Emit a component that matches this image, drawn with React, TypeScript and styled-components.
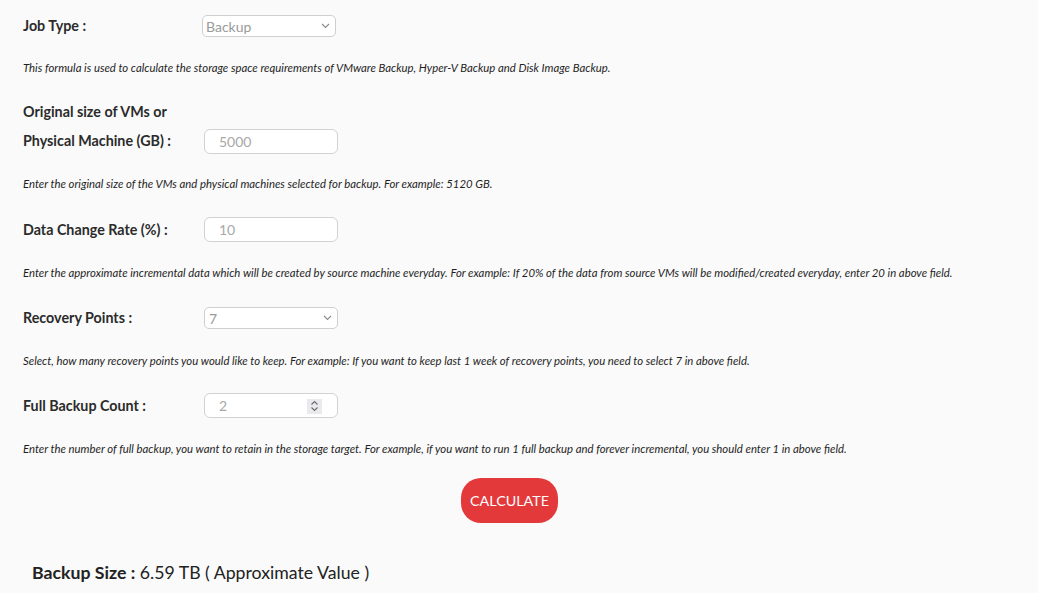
import React from "react";
import styled, { createGlobalStyle } from "styled-components";

const Global = createGlobalStyle`
  html, body { margin: 0; padding: 0; background: #fafafa; }
  body { font-family: Lato, "Open Sans", sans-serif; color: #222; }
`;

const Page = styled.div`
  padding: 11px 42px 0 23px;
  width: 1038px;
  box-sizing: border-box;
`;

const Block = styled.section`
  display: flex;
  flex-direction: column;
`;

const Row = styled.div`
  display: flex;
  align-items: flex-end;
`;

const Label = styled.label`
  width: 160px;
  flex: none;
  font-size: 14.3px;
  font-weight: 700;
  line-height: 29px;
  color: #2b2b2b;
`;

const Control = styled.div<{ $offset: number; $bottom: number }>`
  margin-left: ${(p) => p.$offset}px;
  margin-bottom: ${(p) => p.$bottom}px;
  position: relative;
  display: flex;
`;

const Select = styled.select<{ $pad: number }>`
  width: 134px;
  height: 22px;
  box-sizing: border-box;
  border: 1px solid #cfcfcf;
  border-radius: 5px;
  background: #fff;
  color: #9a9a9a;
  font-family: Lato, sans-serif;
  font-size: 14px;
  padding: 0 0 0 ${(p) => p.$pad}px;
  appearance: none;
  outline: none;
`;

const Chevron = styled.svg`
  position: absolute;
  right: 6px;
  top: 50%;
  margin-top: -3px;
  width: 9px;
  height: 6px;
  pointer-events: none;
`;

const Input = styled.input`
  width: 134px;
  height: 25px;
  box-sizing: border-box;
  border: 1px solid #d2d2d2;
  border-radius: 6px;
  background: #fff;
  font-family: Lato, sans-serif;
  font-size: 14px;
  padding: 0 0 0 14px;
  outline: none;
  &::placeholder { color: #a8a8a8; }
  &::-webkit-inner-spin-button, &::-webkit-outer-spin-button {
    -webkit-appearance: none;
    margin: 0;
  }
  -moz-appearance: textfield;
`;

const Spinner = styled.span`
  position: absolute;
  right: 16px;
  top: 50%;
  margin-top: -7px;
  width: 15px;
  height: 15px;
  background: #e9e9ee;
  display: flex;
  align-items: center;
  justify-content: center;
  pointer-events: none;
`;

const Desc = styled.p<{ $top?: number; $bottom?: number }>`
  margin: ${(p) => p.$top ?? 21}px 0 ${(p) => p.$bottom ?? 22}px;
  font-size: 11.35px;
  font-style: italic;
  line-height: 16px;
  color: #1f1f1f;
`;

const ButtonRow = styled.div`
  display: flex;
  justify-content: center;
`;

const CalcButton = styled.button`
  width: 97px;
  height: 45px;
  border: none;
  border-radius: 20px;
  background: #e3393b;
  color: #fff;
  font-family: Lato, sans-serif;
  font-size: 14.3px;
  cursor: pointer;
`;

const Result = styled.div`
  margin: 38px 0 0 9px;
  font-size: 17.7px;
  line-height: 24px;
  color: #222;
`;

const Strong = styled.strong`
  font-weight: 700;
`;

const SelectChevron = () => (
  <Chevron viewBox="0 0 9 6">
    <path d="M1 1 L4.5 4.5 L8 1" fill="none" stroke="#8a8a8a" strokeWidth="1.1" />
  </Chevron>
);

const SpinIcon = () => (
  <svg width="9" height="12" viewBox="0 0 9 12">
    <path d="M1.5 4.5 L4.5 1.5 L7.5 4.5 M1.5 7.5 L4.5 10.5 L7.5 7.5" fill="none" stroke="#6b6b6b" strokeWidth="1.1" />
  </svg>
);

export default function App() {
  return (
    <>
      <Global />
      <Page>
        <Block>
          <Row>
            <Label>Job Type :</Label>
            <Control $offset={19} $bottom={3}>
              <Select $pad={3} defaultValue="Backup">
                <option>Backup</option>
              </Select>
              <SelectChevron />
            </Control>
          </Row>
          <Desc $top={20} $bottom={21}>
            This formula is used to calculate the storage space requirements of VMware Backup, Hyper-V Backup and Disk Image Backup.
          </Desc>
        </Block>

        <Block>
          <Row>
            <Label>Original size of VMs or Physical Machine (GB) :</Label>
            <Control $offset={21} $bottom={1}>
              <Input type="text" placeholder="5000" />
            </Control>
          </Row>
          <Desc $bottom={23}>Enter the original size of the VMs and physical machines selected for backup. For example: 5120 GB.</Desc>
        </Block>

        <Block>
          <Row>
            <Label>Data Change Rate (%) :</Label>
            <Control $offset={21} $bottom={2}>
              <Input type="text" placeholder="10" />
            </Control>
          </Row>
          <Desc>
            Enter the approximate incremental data which will be created by source machine everyday. For example: If 20% of the data from source VMs will be modified/created everyday, enter 20 in above field.
          </Desc>
        </Block>

        <Block>
          <Row>
            <Label>Recovery Points :</Label>
            <Control $offset={21} $bottom={3}>
              <Select $pad={4} defaultValue="7">
                <option>7</option>
              </Select>
              <SelectChevron />
            </Control>
          </Row>
          <Desc>
            Select, how many recovery points you would like to keep. For example: If you want to keep last 1 week of recovery points, you need to select 7 in above field.
          </Desc>
        </Block>

        <Block>
          <Row>
            <Label>Full Backup Count :</Label>
            <Control $offset={21} $bottom={2}>
              <Input type="number" placeholder="2" />
              <Spinner>
                <SpinIcon />
              </Spinner>
            </Control>
          </Row>
          <Desc $bottom={21}>
            Enter the number of full backup, you want to retain in the storage target. For example, if you want to run 1 full backup and forever incremental, you should enter 1 in above field.
          </Desc>
        </Block>

        <ButtonRow>
          <CalcButton>CALCULATE</CalcButton>
        </ButtonRow>

        <Result>
          <Strong>Backup Size :</Strong> 6.59 TB ( Approximate Value )
        </Result>
      </Page>
    </>
  );
}
